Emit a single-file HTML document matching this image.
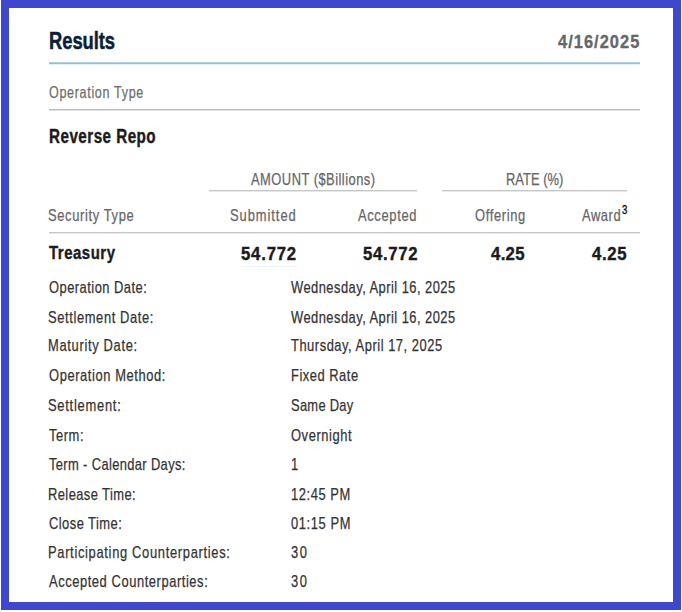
<!DOCTYPE html>
<html><head><meta charset="utf-8"><title>Results</title>
<style>
html,body{margin:0;padding:0;background:#fff;width:682px;height:612px;overflow:hidden;position:relative}
.t{position:absolute;white-space:nowrap;line-height:1;font-family:"Liberation Sans",sans-serif;transform-origin:0 0}
.ln{position:absolute}
</style></head><body>
<div class="ln" style="left:1px;top:0;width:680px;height:610px;box-sizing:border-box;border:8px solid #3f48cc"></div>
<div class="ln" style="left:49px;top:62px;width:591px;height:1px;background:#b3d0e2"></div>
<div class="ln" style="left:49px;top:63px;width:591px;height:1px;background:#94bdd6"></div>
<div class="ln" style="left:49px;top:64px;width:591px;height:1px;background:#e6eff5"></div>
<div class="ln" style="left:49px;top:109px;width:591px;height:1px;background:#bbbbbb"></div>
<div class="ln" style="left:49px;top:110px;width:591px;height:1px;background:#e2e2e2"></div>
<div class="ln" style="left:209px;top:190px;width:208px;height:1px;background:#c6c6c6"></div>
<div class="ln" style="left:209px;top:191px;width:208px;height:1px;background:#e8e8e8"></div>
<div class="ln" style="left:442px;top:190px;width:185px;height:1px;background:#c6c6c6"></div>
<div class="ln" style="left:442px;top:191px;width:185px;height:1px;background:#e8e8e8"></div>
<div class="ln" style="left:49px;top:232px;width:591px;height:1px;background:#c6c6c6"></div>
<div class="ln" style="left:49px;top:233px;width:591px;height:1px;background:#e8e8e8"></div>
<div class="ln" style="left:241px;top:266px;width:55px;height:1px;background:#eef3fc"></div>

<div class="t" style="left:49.00px;top:30.00px;font-size:23.50px;font-weight:700;color:#0b1f3a;-webkit-text-stroke:0.50px #0b1f3a;letter-spacing:-0.031px;transform:scaleX(0.7798)">Results</div>
<div class="t" style="left:558.00px;top:32.00px;font-size:19.00px;font-weight:700;color:#666666;-webkit-text-stroke:0.30px #666666;letter-spacing:1.177px;transform:scaleX(0.8657)">4/16/2025</div>
<div class="t" style="left:49.00px;top:84.00px;font-size:16.50px;color:#6e6e6e;-webkit-text-stroke:0.25px #6e6e6e;letter-spacing:0.893px;transform:scaleX(0.7596)">Operation Type</div>
<div class="t" style="left:49.00px;top:127.00px;font-size:19.50px;font-weight:700;color:#1c1c1c;-webkit-text-stroke:0.40px #1c1c1c;letter-spacing:0.605px;transform:scaleX(0.7798)">Reverse Repo</div>
<div class="t" style="left:251.00px;top:171.00px;font-size:17.00px;color:#666666;-webkit-text-stroke:0.25px #666666;letter-spacing:0.625px;transform:scaleX(0.7596)">AMOUNT ($Billions)</div>
<div class="t" style="left:506.00px;top:171.00px;font-size:17.00px;color:#666666;-webkit-text-stroke:0.25px #666666;letter-spacing:0.049px;transform:scaleX(0.7596)">RATE (%)</div>
<div class="t" style="left:48.00px;top:207.00px;font-size:17.00px;color:#666666;-webkit-text-stroke:0.25px #666666;letter-spacing:0.838px;transform:scaleX(0.7596)">Security Type</div>
<div class="t" style="left:230.00px;top:207.00px;font-size:17.00px;color:#666666;-webkit-text-stroke:0.25px #666666;letter-spacing:1.244px;transform:scaleX(0.7596)">Submitted</div>
<div class="t" style="left:358.00px;top:207.00px;font-size:17.00px;color:#666666;-webkit-text-stroke:0.25px #666666;letter-spacing:0.856px;transform:scaleX(0.7596)">Accepted</div>
<div class="t" style="left:475.00px;top:207.00px;font-size:17.00px;color:#666666;-webkit-text-stroke:0.25px #666666;letter-spacing:0.857px;transform:scaleX(0.7596)">Offering</div>
<div class="t" style="left:582.00px;top:207.00px;font-size:17.00px;color:#666666;-webkit-text-stroke:0.25px #666666;letter-spacing:0.750px;transform:scaleX(0.7596)">Award</div>
<div class="t" style="left:622.00px;top:204.00px;font-size:12.00px;color:#111111;-webkit-text-stroke:0.35px #111111;transform:scaleX(0.8000)">3</div>
<div class="t" style="left:49.00px;top:243.00px;font-size:19.20px;font-weight:700;color:#1c1c1c;-webkit-text-stroke:0.40px #1c1c1c;letter-spacing:0.661px;transform:scaleX(0.7798)">Treasury</div>
<div class="t" style="left:241.00px;top:244.00px;font-size:19.20px;font-weight:700;color:#1c1c1c;-webkit-text-stroke:0.40px #1c1c1c;letter-spacing:0.909px;transform:scaleX(0.8728)">54.772</div>
<div class="t" style="left:363.00px;top:244.00px;font-size:19.20px;font-weight:700;color:#1c1c1c;-webkit-text-stroke:0.40px #1c1c1c;letter-spacing:0.785px;transform:scaleX(0.8728)">54.772</div>
<div class="t" style="left:491.00px;top:244.00px;font-size:19.20px;font-weight:700;color:#1c1c1c;-webkit-text-stroke:0.40px #1c1c1c;letter-spacing:0.376px;transform:scaleX(0.8728)">4.25</div>
<div class="t" style="left:592.00px;top:244.00px;font-size:19.20px;font-weight:700;color:#1c1c1c;-webkit-text-stroke:0.40px #1c1c1c;letter-spacing:0.786px;transform:scaleX(0.8728)">4.25</div>
<div class="t" style="left:49.00px;top:279.00px;font-size:17.00px;color:#333333;-webkit-text-stroke:0.25px #333333;letter-spacing:0.625px;transform:scaleX(0.7596)">Operation Date:</div>
<div class="t" style="left:291.00px;top:279.00px;font-size:17.00px;color:#333333;-webkit-text-stroke:0.25px #333333;letter-spacing:0.606px;transform:scaleX(0.7596)">Wednesday, April 16, 2025</div>
<div class="t" style="left:48.00px;top:309.00px;font-size:17.00px;color:#333333;-webkit-text-stroke:0.25px #333333;letter-spacing:0.810px;transform:scaleX(0.7596)">Settlement Date:</div>
<div class="t" style="left:291.00px;top:309.00px;font-size:17.00px;color:#333333;-webkit-text-stroke:0.25px #333333;letter-spacing:0.606px;transform:scaleX(0.7596)">Wednesday, April 16, 2025</div>
<div class="t" style="left:48.00px;top:337.00px;font-size:17.00px;color:#333333;-webkit-text-stroke:0.25px #333333;letter-spacing:0.889px;transform:scaleX(0.7596)">Maturity Date:</div>
<div class="t" style="left:291.00px;top:337.00px;font-size:17.00px;color:#333333;-webkit-text-stroke:0.25px #333333;letter-spacing:0.690px;transform:scaleX(0.7596)">Thursday, April 17, 2025</div>
<div class="t" style="left:49.00px;top:367.00px;font-size:17.00px;color:#333333;-webkit-text-stroke:0.25px #333333;letter-spacing:0.776px;transform:scaleX(0.7596)">Operation Method:</div>
<div class="t" style="left:291.00px;top:367.00px;font-size:17.00px;color:#333333;-webkit-text-stroke:0.25px #333333;letter-spacing:0.676px;transform:scaleX(0.7596)">Fixed Rate</div>
<div class="t" style="left:48.00px;top:397.00px;font-size:17.00px;color:#333333;-webkit-text-stroke:0.25px #333333;letter-spacing:0.981px;transform:scaleX(0.7596)">Settlement:</div>
<div class="t" style="left:291.00px;top:397.00px;font-size:17.00px;color:#333333;-webkit-text-stroke:0.25px #333333;letter-spacing:0.375px;transform:scaleX(0.7596)">Same Day</div>
<div class="t" style="left:49.00px;top:427.00px;font-size:17.00px;color:#333333;-webkit-text-stroke:0.25px #333333;letter-spacing:0.732px;transform:scaleX(0.7596)">Term:</div>
<div class="t" style="left:291.00px;top:427.00px;font-size:17.00px;color:#333333;-webkit-text-stroke:0.25px #333333;letter-spacing:0.758px;transform:scaleX(0.7596)">Overnight</div>
<div class="t" style="left:49.00px;top:456.00px;font-size:17.00px;color:#333333;-webkit-text-stroke:0.25px #333333;letter-spacing:0.475px;transform:scaleX(0.7596)">Term - Calendar Days:</div>
<div class="t" style="left:291.00px;top:456.00px;font-size:17.00px;color:#333333;-webkit-text-stroke:0.25px #333333;transform:scaleX(0.7596)">1</div>
<div class="t" style="left:48.00px;top:486.00px;font-size:17.00px;color:#333333;-webkit-text-stroke:0.25px #333333;letter-spacing:0.554px;transform:scaleX(0.7596)">Release Time:</div>
<div class="t" style="left:291.00px;top:486.00px;font-size:17.00px;color:#333333;-webkit-text-stroke:0.25px #333333;letter-spacing:0.743px;transform:scaleX(0.7596)">12:45 PM</div>
<div class="t" style="left:49.00px;top:515.00px;font-size:17.00px;color:#333333;-webkit-text-stroke:0.25px #333333;letter-spacing:0.603px;transform:scaleX(0.7596)">Close Time:</div>
<div class="t" style="left:291.00px;top:515.00px;font-size:17.00px;color:#333333;-webkit-text-stroke:0.25px #333333;letter-spacing:0.782px;transform:scaleX(0.7596)">01:15 PM</div>
<div class="t" style="left:48.00px;top:544.00px;font-size:17.00px;color:#333333;-webkit-text-stroke:0.25px #333333;letter-spacing:0.890px;transform:scaleX(0.7596)">Participating Counterparties:</div>
<div class="t" style="left:291.00px;top:544.00px;font-size:17.00px;color:#333333;-webkit-text-stroke:0.25px #333333;letter-spacing:2.125px;transform:scaleX(0.7596)">30</div>
<div class="t" style="left:49.00px;top:573.00px;font-size:17.00px;color:#333333;-webkit-text-stroke:0.25px #333333;letter-spacing:0.745px;transform:scaleX(0.7596)">Accepted Counterparties:</div>
<div class="t" style="left:291.00px;top:573.00px;font-size:17.00px;color:#333333;-webkit-text-stroke:0.25px #333333;letter-spacing:2.125px;transform:scaleX(0.7596)">30</div>
</body></html>
